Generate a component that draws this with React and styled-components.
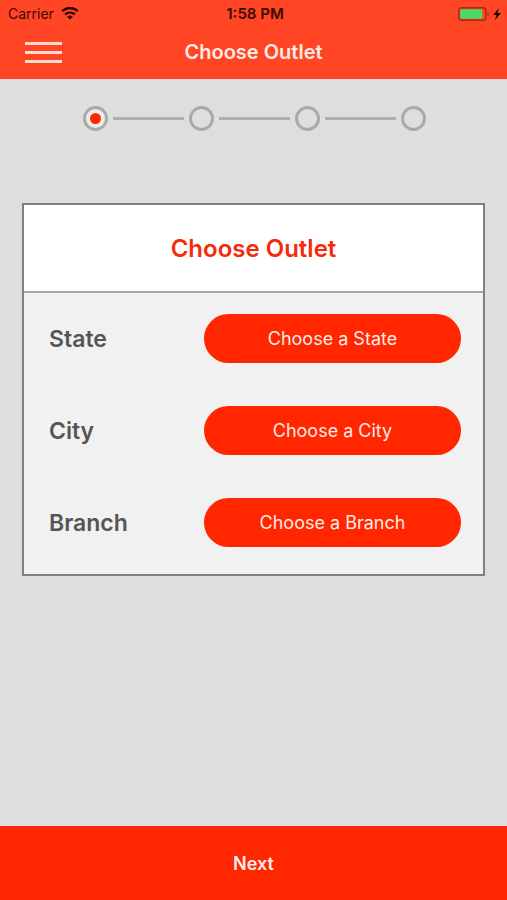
import { Fragment } from 'react';
import styled, { createGlobalStyle } from 'styled-components';

const GlobalStyle = createGlobalStyle`
  * {
    box-sizing: border-box;
  }

  body {
    margin: 0;
    background-color: #dedede;
    font-family: Inter, "Liberation Sans", sans-serif;
  }

  button {
    font-family: inherit;
    cursor: pointer;
  }
`;

const Screen = styled.div`
  min-height: 100vh;
  display: flex;
  flex-direction: column;
`;

const Header = styled.header`
  background-color: #ff4524;
`;

const StatusBar = styled.div`
  height: 27px;
  padding: 0 5px 0 8px;
  display: grid;
  grid-template-columns: 1fr auto 1fr;
  align-items: center;
  color: #3a0a04;
  font-size: 14px;
`;

const Carrier = styled.div`
  display: flex;
  align-items: center;
  gap: 7px;
`;

const Time = styled.div`
  font-size: 15px;
  font-weight: 600;
`;

const Power = styled.div`
  display: flex;
  align-items: center;
  justify-content: flex-end;
`;

const NavBar = styled.div`
  height: 52px;
  padding: 0 25px 2px;
  display: grid;
  grid-template-columns: 1fr auto 1fr;
  align-items: center;
`;

const MenuButton = styled.button`
  width: 37px;
  height: 21px;
  padding: 0;
  border: none;
  background: none;
  display: flex;
  flex-direction: column;
  justify-content: space-between;
`;

const MenuLine = styled.span`
  width: 100%;
  height: 3px;
  background-color: #ffdcd4;
`;

const NavTitle = styled.h1`
  margin: 0;
  color: #ffeae5;
  font-size: 20px;
  font-weight: 600;
`;

const Main = styled.main`
  flex: 1;
  padding: 0 22px;
`;

const Steps = styled.div`
  padding: 27px 59px 72px 61px;
  display: flex;
  align-items: center;
`;

const Step = styled.div`
  width: 25px;
  height: 25px;
  flex: none;
  display: flex;
  align-items: center;
  justify-content: center;
  border: 3px solid #a9a9a9;
  border-radius: 50%;
  background-color: ${(props) => (props.$active ? '#ececec' : 'transparent')};
`;

const StepDot = styled.span`
  width: 11px;
  height: 11px;
  border-radius: 50%;
  background-color: #ff2600;
`;

const StepLine = styled.div`
  flex: 1;
  height: 3px;
  margin: 0 5px;
  background-color: #afafaf;
`;

const Card = styled.section`
  padding-bottom: 5px;
  border: 2px solid #808080;
  background-color: #f1f1f1;
`;

const CardHeader = styled.div`
  height: 88px;
  display: flex;
  align-items: center;
  justify-content: center;
  border-bottom: 2px solid #a6a6a6;
  background-color: white;
`;

const CardTitle = styled.h2`
  margin: 0;
  color: #f52a0c;
  font-size: 24px;
  font-weight: 600;
`;

const Row = styled.div`
  padding: 21px 22px 22px 25px;
  display: flex;
  align-items: center;
`;

const Label = styled.label`
  flex: 0 0 155px;
  color: #555;
  font-size: 23px;
  font-weight: 600;
`;

const ChooseButton = styled.button`
  flex: 1;
  height: 49px;
  border: none;
  border-radius: 25px;
  background-color: #ff2600;
  color: #ffebe6;
  font-size: 18px;
`;

const NextButton = styled.button`
  height: 74px;
  border: none;
  background-color: #ff2600;
  color: #ffeeea;
  font-size: 18px;
  font-weight: 600;
`;

const steps = [1, 2, 3, 4];

const fields = [
  { id: 'state', label: 'State', text: 'Choose a State' },
  { id: 'city', label: 'City', text: 'Choose a City' },
  { id: 'branch', label: 'Branch', text: 'Choose a Branch' },
];

const WifiIcon = () => (
  <svg width="18" height="13" viewBox="0 0 18 13" fill="none" stroke="#2b0502" aria-hidden="true">
    <path d="M1.2 4.2a11.2 11.2 0 0 1 15.6 0" strokeWidth="2.5" />
    <path d="M4.2 7.4a7 7 0 0 1 9.6 0" strokeWidth="2.2" />
    <path d="M9 12.6 6.2 9.8a4 4 0 0 1 5.6 0z" fill="#2b0502" stroke="none" />
  </svg>
);

const BatteryIcon = () => (
  <svg width="44" height="14" viewBox="0 0 44 14" aria-hidden="true">
    <rect x="0.8" y="0.8" width="27" height="12.4" rx="2.5" fill="none" stroke="#a52b14" strokeWidth="1.4" />
    <rect x="2.2" y="2.2" width="22" height="9.6" rx="1" fill="#4cd964" />
    <path d="M29.6 5v4.2c1.5-.6 1.5-3.6 0-4.2z" fill="#a52b14" />
    <path d="M40.8 1.2 35.2 8h3.3l-1.5 5L43 5.9h-3.5z" fill="#1c0301" />
  </svg>
);

const App = () => {
  return (
    <Screen>
      <GlobalStyle />
      <Header>
        <StatusBar>
          <Carrier>
            Carrier
            <WifiIcon />
          </Carrier>
          <Time>1:58 PM</Time>
          <Power>
            <BatteryIcon />
          </Power>
        </StatusBar>
        <NavBar>
          <MenuButton aria-label="Menu">
            <MenuLine />
            <MenuLine />
            <MenuLine />
          </MenuButton>
          <NavTitle>Choose Outlet</NavTitle>
        </NavBar>
      </Header>
      <Main>
        <Steps>
          {steps.map((step) => (
            <Fragment key={step}>
              {step > 1 && <StepLine />}
              <Step $active={step === 1}>{step === 1 && <StepDot />}</Step>
            </Fragment>
          ))}
        </Steps>
        <Card>
          <CardHeader>
            <CardTitle>Choose Outlet</CardTitle>
          </CardHeader>
          {fields.map((field) => (
            <Row key={field.id}>
              <Label htmlFor={field.id}>{field.label}</Label>
              <ChooseButton id={field.id}>{field.text}</ChooseButton>
            </Row>
          ))}
        </Card>
      </Main>
      <NextButton>Next</NextButton>
    </Screen>
  );
};

export default App;
